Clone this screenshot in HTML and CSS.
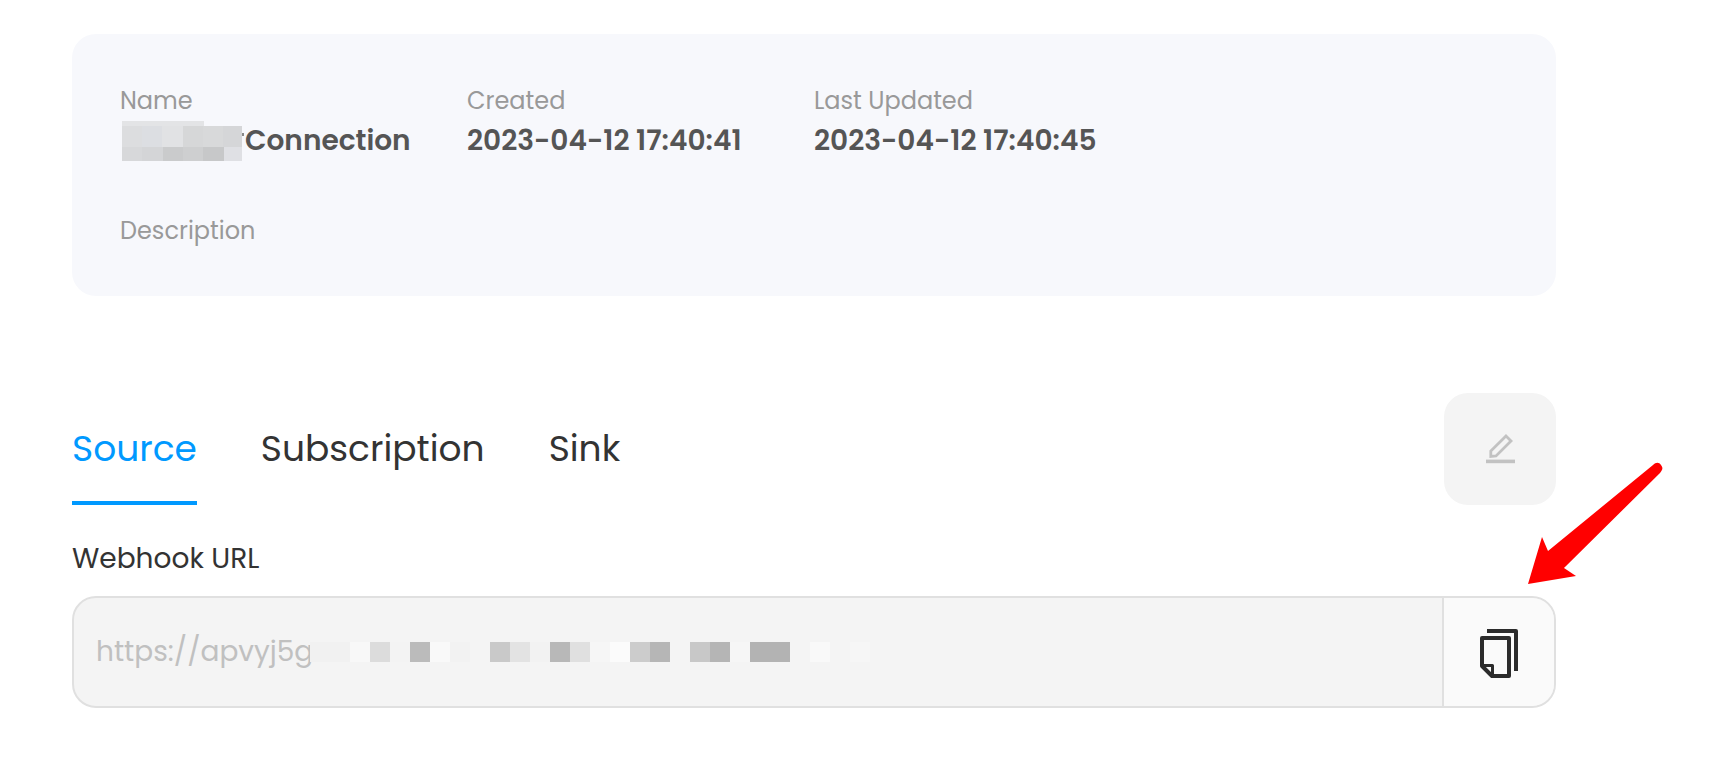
FILE: index.html
```html
<!DOCTYPE html>
<html lang="en">
<head>
<meta charset="utf-8">
<meta name="viewport" content="width=device-width, initial-scale=1">
<title>Connection</title>
<link rel="stylesheet" href="styles.css">
</head>
<body>
<main class="page">
  <section class="card">
    <dl class="details">
      <div class="detail">
        <dt>Name</dt>
        <dd class="name-value">
          <svg class="name-mask" width="125" height="40" viewBox="0 0 125 40" shape-rendering="crispEdges" aria-hidden="true">
            <path fill="#e3e4e6" d="M2 0h82v5H2z"/>
            <path fill="#dcdddf" d="M2 5h20v21H2z"/>
            <path fill="#dcdee2" d="M22 5h20v21H22z"/>
            <path fill="#e1e2e4" d="M42 5h21v21H42z"/>
            <path fill="#d6d7d8" d="M63 5h20v21H63z"/>
            <path fill="#d8d9da" d="M83 5h20v21H83z"/>
            <path fill="#d5d6d8" d="M103 5h19v21h-19z"/>
            <path fill="#d7d8da" d="M2 26h20v14H2z"/>
            <path fill="#d4d5d7" d="M22 26h21v14H22z"/>
            <path fill="#cacbcc" d="M43 26h20v14H43z"/>
            <path fill="#cecfd0" d="M63 26h20v14H63z"/>
            <path fill="#c7c8c9" d="M83 26h21v14H83z"/>
            <path fill="#dfe0e4" d="M104 26h18v14h-18z"/>
            <path fill="#888" d="M122 12h2v3h-2z"/>
          </svg><span>Connection</span>
        </dd>
      </div>
      <div class="detail"><dt>Created</dt><dd>2023-04-12 17:40:41</dd></div>
      <div class="detail"><dt>Last Updated</dt><dd>2023-04-12 17:40:45</dd></div>
      <div class="detail detail-wide"><dt>Description</dt></div>
    </dl>
  </section>

  <div class="toolbar">
    <nav class="tabs">
      <a class="tab tab-active" href="#source" aria-current="page">Source</a>
      <a class="tab" href="#subscription">Subscription</a>
      <a class="tab" href="#sink">Sink</a>
    </nav>
    <button class="edit" type="button" aria-label="Edit" disabled>
      <svg width="30" height="30" viewBox="0 0 30 30" fill="none" stroke="#c2c2c2" aria-hidden="true">
        <path stroke-width="2.800" d="M5.800 22.500V17L21 2l5 4.900L11 22z"/>
        <path stroke-width="3.600" d="M1 27.400h29"/>
      </svg>
    </button>
  </div>

  <div class="field" id="source">
    <label class="field-label" for="webhook">Webhook URL</label>
    <div class="control">
      <input class="url" id="webhook" type="text" value="https://apvyj5g" readonly>
      <svg class="url-mask" width="560" height="20" viewBox="0 0 560 20" shape-rendering="crispEdges" aria-hidden="true">
        <path fill="#f1f1f1" d="M0 0h40v20H0z"/>
        <path fill="#f8f8f8" d="M40 0h20v20H40z"/>
        <path fill="#dcdcdc" d="M60 0h20v20H60z"/>
        <path fill="#f3f3f3" d="M80 0h20v20H80z"/>
        <path fill="#bbbbbb" d="M100 0h20v20h-20z"/>
        <path fill="#f9f9f9" d="M120 0h20v20h-20z"/>
        <path fill="#f2f2f2" d="M140 0h20v20h-20z"/>
        <path fill="#c9c9c9" d="M180 0h20v20h-20z"/>
        <path fill="#e3e3e3" d="M200 0h20v20h-20z"/>
        <path fill="#f2f2f2" d="M220 0h20v20h-20z"/>
        <path fill="#b8b8b8" d="M240 0h20v20h-20z"/>
        <path fill="#e0e0e0" d="M260 0h20v20h-20z"/>
        <path fill="#f6f6f6" d="M280 0h20v20h-20z"/>
        <path fill="#fbfbfb" d="M300 0h20v20h-20z"/>
        <path fill="#cccccc" d="M320 0h20v20h-20z"/>
        <path fill="#b6b6b6" d="M340 0h20v20h-20z"/>
        <path fill="#c8c8c8" d="M380 0h20v20h-20z"/>
        <path fill="#b5b5b5" d="M400 0h20v20h-20z"/>
        <path fill="#f6f6f6" d="M420 0h20v20h-20z"/>
        <path fill="#b3b3b3" d="M440 0h40v20h-40z"/>
        <path fill="#f9f9f9" d="M500 0h20v20h-20z"/>
        <path fill="#f6f6f6" d="M540 0h20v20h-20z"/>
      </svg>
      <button class="copy" type="button" aria-label="Copy webhook URL">
        <svg width="38" height="50" viewBox="0 0 38 50" fill="none" stroke="#2b2b2b" stroke-width="4" stroke-linejoin="round" aria-hidden="true">
          <path d="M7 3h29v40"/>
          <path d="M2 10h27v38H12L2 38z"/>
          <path stroke-width="3" d="M2 37.500h10.500V48"/>
        </svg>
      </button>
    </div>
    <svg class="arrow" width="136" height="124" viewBox="0 0 136 124" aria-hidden="true">
      <path fill="#f00" d="M0 122L14 75l6 14L125 3c3-3 6-3 8 0s2 4-1 8L36 106l12 8z"/>
    </svg>
  </div>
</main>
</body>
</html>
```
FILE: styles.css
```css
* {
  box-sizing: border-box;
}

body {
  margin: 0;
  background: #fff;
  color: #333;
  font-family: Poppins, Inter, "Open Sans", sans-serif;
}

.page {
  padding: 34px 160px 48px 72px;
}

.card {
  padding: 47px 48px 45px;
  border-radius: 24px;
  background: #f7f8fc;
}

.details {
  display: grid;
  grid-template-columns: 347px 347px 1fr;
  row-gap: 50px;
  margin: 0;
}

.detail-wide {
  grid-column: 1 / -1;
}

dt {
  color: #999;
  font-size: 24px;
  line-height: 40px;
}

dd {
  margin: 0;
  color: #555;
  font-size: 28px;
  font-weight: 600;
  line-height: 40px;
  white-space: nowrap;
}

.name-value {
  display: flex;
}

.toolbar {
  display: flex;
  justify-content: space-between;
  margin-top: 97px;
}

.tabs {
  display: flex;
  gap: 64px;
}

.tab {
  border-bottom: 4px solid transparent;
  padding-top: 4px;
  color: #333;
  font-size: 36px;
  line-height: 104px;
  text-decoration: none;
}

.tab-active {
  border-color: #09f;
  color: #09f;
}

.edit {
  display: grid;
  place-items: center;
  width: 112px;
  height: 112px;
  padding: 0;
  border: 0;
  border-radius: 24px;
  background: #f4f4f4;
}

.field {
  position: relative;
  margin-top: 33px;
}

.field-label {
  display: block;
  margin-bottom: 16px;
  font-size: 28px;
  line-height: 42px;
}

.control {
  position: relative;
  display: flex;
  height: 112px;
  overflow: hidden;
  border: 2px solid #e0e0e0;
  border-radius: 24px;
  background: #f4f4f4;
}

.url {
  flex: 1;
  min-width: 0;
  padding: 0 22px;
  border: 0;
  background: transparent;
  color: #c0c0c0;
  font: inherit;
  font-size: 28px;
  outline: 0;
}

.url-mask {
  position: absolute;
  top: 44px;
  left: 236px;
}

.copy {
  display: grid;
  place-items: center;
  width: 112px;
  padding: 2px 0 0;
  border: 0;
  border-left: 2px solid #e0e0e0;
  background: #fafafa;
  cursor: pointer;
}

.arrow {
  position: absolute;
  top: -76px;
  right: -108px;
}
```
